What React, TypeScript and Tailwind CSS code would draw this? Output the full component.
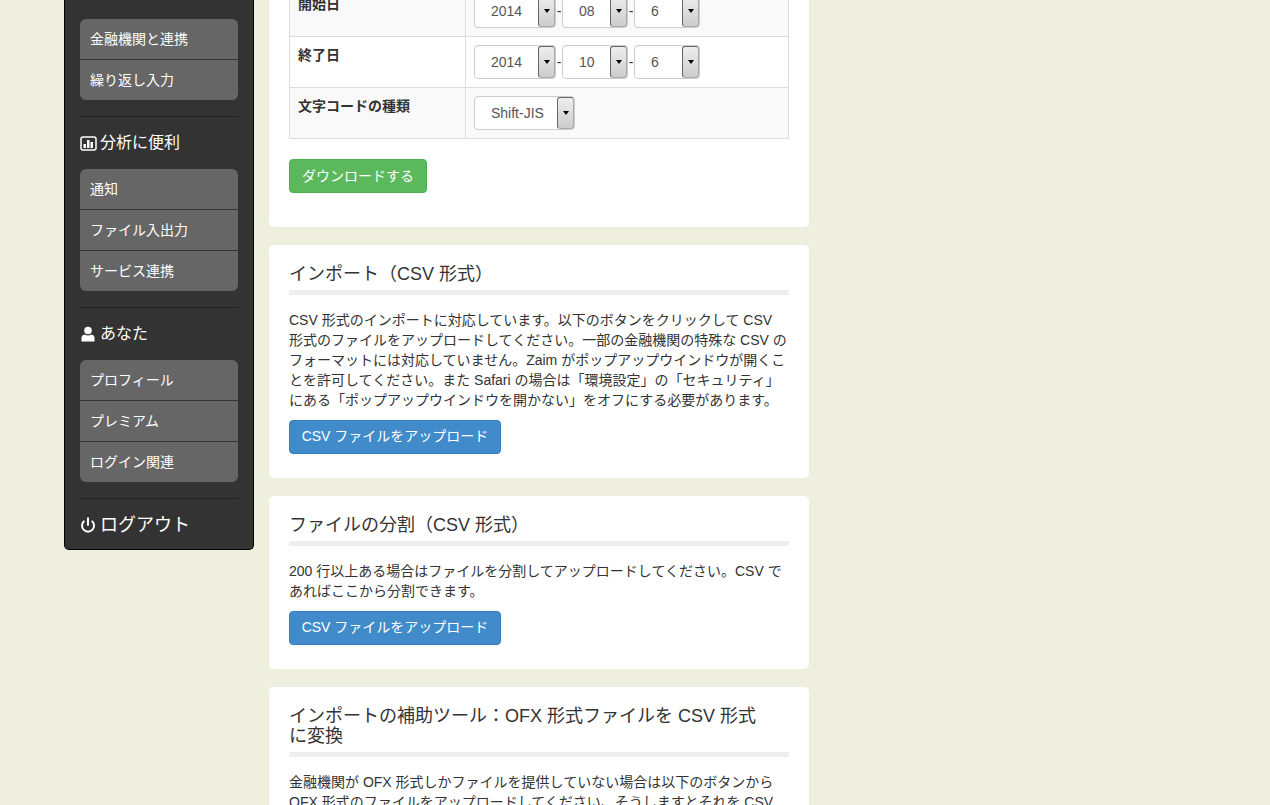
import { Power } from "lucide-react";

const font = { fontFamily: '"Liberation Sans", "Noto Sans CJK JP", sans-serif' };

function Menu({ items }: { items: string[] }) {
  return (
    <div className="rounded-md bg-[#666] overflow-hidden">
      {items.map((item, i) => (
        <div
          key={item}
          className={`h-[40px] pl-[10px] flex items-center text-[14px] text-white ${i > 0 ? "border-t border-[#333] h-[41px]" : ""}`}
        >
          {item}
        </div>
      ))}
    </div>
  );
}

function StatsIcon() {
  return (
    <svg width="17" height="15" viewBox="0 0 17 15" className="shrink-0">
      <rect x="1" y="1" width="15" height="13" rx="2" fill="none" stroke="#fff" strokeWidth="1.5" />
      <rect x="3.5" y="8" width="2.5" height="4" fill="#fff" />
      <rect x="7" y="4" width="2.5" height="8" fill="#fff" />
      <rect x="10.5" y="6" width="2.5" height="6" fill="#fff" />
    </svg>
  );
}

function UserIcon() {
  return (
    <svg width="14" height="16" viewBox="0 0 14 16" className="shrink-0">
      <circle cx="7" cy="4.5" r="3.8" fill="#fff" />
      <path d="M0.5 15.5 V12 Q0.5 9 3.5 8.5 Q7 10.5 10.5 8.5 Q13.5 9 13.5 12 V15.5 Z" fill="#fff" />
    </svg>
  );
}

function Select({ value, width }: { value: string; width: string }) {
  return (
    <div className={`${width} h-[34px] flex items-center bg-white border border-[#ccc] rounded-[4px] pl-[16px] text-[14px] text-[#555] relative`}>
      {value}
      <div className="absolute right-0 top-0 bottom-0 w-[17px] rounded-[3px] border border-[#666] border-r-[#aaa] border-b-[#aaa] bg-gradient-to-b from-[#eee] to-[#ccc] flex items-center justify-center">
        <div className="w-0 h-0 border-x-[3.5px] border-x-transparent border-t-[4px] border-t-black" />
      </div>
    </div>
  );
}

function DateSelects({ y, m, d }: { y: string; m: string; d: string }) {
  return (
    <div className="flex items-center text-[#333] text-[14px]">
      <Select value={y} width="w-[82px]" />
      <span className="w-[6px] text-center">-</span>
      <Select value={m} width="w-[66px]" />
      <span className="w-[6px] text-center">-</span>
      <Select value={d} width="w-[66px]" />
    </div>
  );
}

function Row({ label, striped, children }: { label: string; striped?: boolean; children: React.ReactNode }) {
  return (
    <div className={`flex border-b border-[#ddd] h-[51px] ${striped ? "bg-[#f9f9f9]" : ""}`}>
      <div className="w-[176px] border-r border-[#ddd] pl-[8px] pt-[8px] font-bold text-[14px] leading-[20px]">{label}</div>
      <div className="flex-1 pl-[8px] pt-[8px]">{children}</div>
    </div>
  );
}

function Heading({ children }: { children: React.ReactNode }) {
  return (
    <h3 className="text-[18px] leading-[19.8px] text-[#333] border-b-[5px] border-[#eee] pb-[5px] mb-[15px]">{children}</h3>
  );
}

function BlueButton() {
  return (
    <div className="w-[212px] h-[34px] mt-[10px] flex items-center justify-center rounded-[4px] bg-[#428bca] border border-[#357ebd] text-white text-[14px]">
      CSV ファイルをアップロード
    </div>
  );
}

export default function App() {
  return (
    <div className="h-[805px] overflow-hidden bg-[#efefe0] text-[#333]" style={font}>
      <div className="flex items-start -mt-[60px] pl-[64px]">
        <aside className="w-[190px] h-[610px] bg-[#333] border border-black border-t-0 rounded-b-[5px] pt-[79px] px-[15px] shrink-0">
          <Menu items={["金融機関と連携", "繰り返し入力"]} />
          <hr className="border-t border-[#222] border-b-0 mt-[16px]" />
          <div className="h-[52px] flex items-center gap-[3px] text-white text-[16px]">
            <StatsIcon />
            分析に便利
          </div>
          <Menu items={["通知", "ファイル入出力", "サービス連携"]} />
          <hr className="border-t border-[#222] mt-[16px]" />
          <div className="h-[52px] flex items-center gap-[5px] pl-[1px] text-white text-[16px]">
            <UserIcon />
            あなた
          </div>
          <Menu items={["プロフィール", "プレミアム", "ログイン関連"]} />
          <hr className="border-t border-[#222] mt-[16px]" />
          <div className="h-[52px] flex items-center gap-[4px] text-white text-[18px]">
            <Power size={16} strokeWidth={3} className="shrink-0" />
            ログアウト
          </div>
        </aside>
        <main className="w-[540px] ml-[15px] flex flex-col gap-[18px] shrink-0">
          <section className="bg-white rounded-b-[5px] px-[20px] pt-[45px] h-[287px]">
            <div className="border border-b-0 border-[#ddd] w-[500px]">
              <Row label="開始日" striped>
                <DateSelects y="2014" m="08" d="6" />
              </Row>
              <Row label="終了日">
                <DateSelects y="2014" m="10" d="6" />
              </Row>
              <Row label="文字コードの種類" striped>
                <Select value="Shift-JIS" width="w-[101px]" />
              </Row>
            </div>
            <div className="w-[138px] h-[34px] mt-[20px] flex items-center justify-center rounded-[4px] bg-[#5cb85c] border border-[#4cae4c] text-white text-[14px]">
              ダウンロードする
            </div>
          </section>
          <section className="bg-white rounded-[5px] px-[20px] pt-[20px] h-[233px]">
            <Heading>インポート（CSV 形式）</Heading>
            <p className="text-[14px] leading-[20px] whitespace-nowrap">
              CSV 形式のインポートに対応しています。以下のボタンをクリックして CSV
              <br />
              形式のファイルをアップロードしてください。一部の金融機関の特殊な CSV の
              <br />
              フォーマットには対応していません。Zaim がポップアップウインドウが開くこ
              <br />
              とを許可してください。また Safari の場合は「環境設定」の「セキュリティ」
              <br />
              にある「ポップアップウインドウを開かない」をオフにする必要があります。
            </p>
            <BlueButton />
          </section>
          <section className="bg-white rounded-[5px] px-[20px] pt-[20px] h-[173px]">
            <Heading>ファイルの分割（CSV 形式）</Heading>
            <p className="text-[14px] leading-[20px] whitespace-nowrap">
              200 行以上ある場合はファイルを分割してアップロードしてください。CSV で
              <br />
              あればここから分割できます。
            </p>
            <BlueButton />
          </section>
          <section className="bg-white rounded-[5px] px-[20px] pt-[20px] h-[200px]">
            <Heading>インポートの補助ツール：OFX 形式ファイルを CSV 形式<br />に変換</Heading>
            <p className="text-[14px] leading-[20px] whitespace-nowrap">
              金融機関が OFX 形式しかファイルを提供していない場合は以下のボタンから
              <br />
              OFX 形式のファイルをアップロードしてください、そうしますとそれを CSV
            </p>
          </section>
        </main>
      </div>
    </div>
  );
}
